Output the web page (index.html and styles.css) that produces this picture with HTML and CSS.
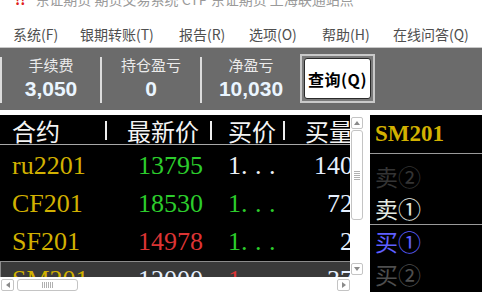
FILE: index.html
```html
<!DOCTYPE html>
<html lang="zh-CN">
<head>
<meta charset="utf-8">
<title>期货交易系统</title>
<link rel="stylesheet" href="styles.css">
</head>
<body>
<div class="app">
  <div class="title"><span class="title-text"><span class="warn">!!</span>东证期货 期货交易系统 CTP 东证期货 上海联通站点</span></div>
  <nav class="menu">
    <span>系统(F)</span>
    <span>银期转账(T)</span>
    <span>报告(R)</span>
    <span>选项(O)</span>
    <span>帮助(H)</span>
    <span>在线问答(Q)</span>
  </nav>
  <div class="stats">
    <div class="stat"><div class="stat-label">手续费</div><div class="stat-value">3,050</div></div>
    <div class="stat"><div class="stat-label">持仓盈亏</div><div class="stat-value">0</div></div>
    <div class="stat"><div class="stat-label">净盈亏</div><div class="stat-value">10,030</div></div>
    <div class="qwrap"><button class="query">查询(Q)</button></div>
  </div>
  <div class="main">
    <div class="left">
      <div class="grid-area">
        <div class="table">
          <div class="thead">
            <span class="h1">合约</span><span class="bar"></span>
            <span class="h2">最新价</span><span class="bar"></span>
            <span class="h3">买价</span><span class="bar"></span>
            <span class="h4">买量</span>
          </div>
          <div class="tbody">
            <div class="row">
              <span class="c-name">ru2201</span><span class="c-price up">13795</span><span class="c-bid white">1<span class="dots">...</span></span><span class="c-vol">140</span>
            </div>
            <div class="row">
              <span class="c-name">CF201</span><span class="c-price up">18530</span><span class="c-bid up">1<span class="dots">...</span></span><span class="c-vol">72</span>
            </div>
            <div class="row">
              <span class="c-name">SF201</span><span class="c-price down">14978</span><span class="c-bid up">1<span class="dots">...</span></span><span class="c-vol">2</span>
            </div>
            <div class="row sel">
              <span class="c-name">SM201</span><span class="c-price light">12000</span><span class="c-bid down">1<span class="dots">...</span></span><span class="c-vol">37</span>
            </div>
          </div>
        </div>
        <div class="vscroll">
          <div class="sb-btn"><span class="tri tri-up"></span></div>
          <div class="vthumb"><span class="vgrip"></span></div>
          <div class="sb-btn sb-last"><span class="tri tri-down"></span></div>
        </div>
      </div>
      <div class="hscroll">
        <div class="sb-btn hb-first"><span class="tri tri-left"></span></div>
        <div class="hthumb"><span class="hgrip"></span></div>
        <div class="sb-btn hb-last"><span class="tri tri-right"></span></div>
      </div>
    </div>
    <div class="depth">
      <div class="depth-head">SM201</div>
      <div class="depth-sell">
        <div class="d-row dim">卖②</div>
        <div class="d-row bright">卖①</div>
      </div>
      <div class="depth-buy">
        <div class="d-row blue">买①</div>
        <div class="d-row grey">买②</div>
      </div>
    </div>
  </div>
</div>
</body>
</html>
```

FILE: styles.css
```css
* { box-sizing: border-box; margin: 0; padding: 0; }
html, body { width: 482px; height: 292px; overflow: hidden; background: #fff; }
body { font-family: "Noto Sans CJK SC", "Noto Sans", sans-serif; }

.title { height: 9px; overflow: hidden; }
.title-text { display: block; margin-top: -11px; padding-left: 15px; font-size: 14px; line-height: 20px; color: #9a9a9a; white-space: nowrap; }
.warn { color: #e02020; font-weight: bold; margin-right: 10px; }

.menu { height: 39px; padding: 15px 0 0 13px; display: grid; grid-template-columns: 67px 99px 70px 73px 71px auto; border-bottom: 1px solid #c8c8c8; font-size: 14px; line-height: 20px; color: #4f4f4f; white-space: nowrap; }

.stats { height: 62px; background: #6b6b6b; display: flex; align-items: flex-start; padding-top: 9px; }
.stat { width: 100px; height: 46px; border-left: 2px solid #dcdcdc; text-align: center; }
.stat-label { font-size: 15px; line-height: 16px; color: #ebebeb; }
.stat-value { margin-top: 3px; font-family: "Liberation Sans", Arial, sans-serif; font-weight: bold; font-size: 21px; line-height: 26px; color: #eaf5ff; }
.qwrap { margin-top: -3px; width: 75px; height: 49px; border: 2px solid #c9c9c9; padding: 2px; background: #7a7a7a; }
.query { display: block; width: 100%; height: 100%; border: 1px solid #2a2a2a; border-radius: 3px; background: #fff; font-family: "Noto Sans CJK SC", sans-serif; font-weight: bold; font-size: 16px; color: #000; letter-spacing: 0.5px; }

.main { margin-top: 5px; height: 177px; display: flex; }
.left { width: 364px; display: flex; flex-direction: column; }
.grid-area { height: 162px; display: flex; }
.table { width: 350px; background: #000; overflow: hidden; }

.thead { height: 30px; display: flex; align-items: center; padding-top: 2px; color: #f4f4f4; font-size: 24px; line-height: 26px; border-bottom: 1px solid #a8a8a8; white-space: nowrap; }
.thead span { flex: none; }
.h1 { width: 105px; padding-left: 12px; }
.h2 { width: 103px; padding-left: 20px; }
.h3 { width: 71px; padding-left: 16px; }
.h4 { width: 70px; padding-left: 20px; }
.bar { width: 2px; height: 19px; background: #eeeeee; }

.tbody { margin-top: 2px; }
.row { width: 353px; height: 38px; display: grid; grid-template-columns: 110px 93px 97px 53px; font-family: "Liberation Serif", "Times New Roman", serif; font-size: 26px; line-height: 38px; white-space: nowrap; }
.row.sel { background: #3a3a3a; box-shadow: inset 1px 1px 0 #8c8c8c; }
.c-name { padding-left: 12px; color: #d2b100; }
.c-price { text-align: right; }
.c-bid { padding-left: 25px; }
.dots { letter-spacing: 7.5px; }
.c-vol { text-align: right; color: #e6f0ff; }
.up { color: #2ccd2c; }
.down { color: #dc3434; }
.white { color: #eef3f8; }
.light { color: #e6f0ff; }

.vscroll { width: 14px; background: #fff; display: flex; flex-direction: column; align-items: center; }
.sb-btn { width: 12px; height: 12px; border: 1px solid #c4c4c4; border-radius: 2px; background: #fff; display: flex; align-items: center; justify-content: center; flex: none; }
.vscroll .sb-btn:first-child { margin-top: 2px; }
.sb-last { margin-top: auto; margin-bottom: 2px; }
.vthumb { margin-top: 1px; width: 12px; height: 90px; border: 1px solid #c4c4c4; border-radius: 3px; display: flex; align-items: center; justify-content: center; }
.vgrip { width: 6px; height: 9px; background: repeating-linear-gradient(to bottom, #b0b0b0 0 1px, transparent 1px 2px); }

.tri { width: 0; height: 0; }
.tri-up { border-left: 3px solid transparent; border-right: 3px solid transparent; border-bottom: 4px solid #8a8a8a; }
.tri-down { border-left: 3px solid transparent; border-right: 3px solid transparent; border-top: 4px solid #8a8a8a; }
.tri-left { border-top: 3px solid transparent; border-bottom: 3px solid transparent; border-right: 4px solid #8a8a8a; }
.tri-right { border-top: 3px solid transparent; border-bottom: 3px solid transparent; border-left: 4px solid #8a8a8a; }

.hscroll { height: 15px; display: flex; align-items: center; background: #fff; }
.hb-first { margin-left: 1px; width: 13px; }
.hthumb { margin-left: 3px; width: 61px; height: 12px; border: 1px solid #c4c4c4; border-radius: 3px; display: flex; align-items: center; justify-content: center; }
.hgrip { width: 11px; height: 6px; background: repeating-linear-gradient(to right, #b0b0b0 0 1px, transparent 1px 2px); }
.hb-last { margin-left: auto; margin-right: 14px; width: 13px; }

.depth { margin-left: 6px; width: 112px; background: #000; font-size: 23px; white-space: nowrap; }
.depth-head { height: 39px; border-bottom: 1px solid #9a9a9a; padding-left: 5px; font-family: "Liberation Serif", serif; font-weight: bold; font-size: 23px; line-height: 38px; color: #d2b100; }
.depth-sell { height: 71px; padding-top: 6px; border-bottom: 1px solid #9a9a9a; }
.depth-sell .d-row { line-height: 32px; }
.depth-buy .d-row { line-height: 33px; }
.d-row { padding-left: 5px; }
.dim { color: #343434; }
.bright { color: #e4ece4; }
.blue { color: #5f5fff; }
.grey { color: #4e4e4e; }
```
